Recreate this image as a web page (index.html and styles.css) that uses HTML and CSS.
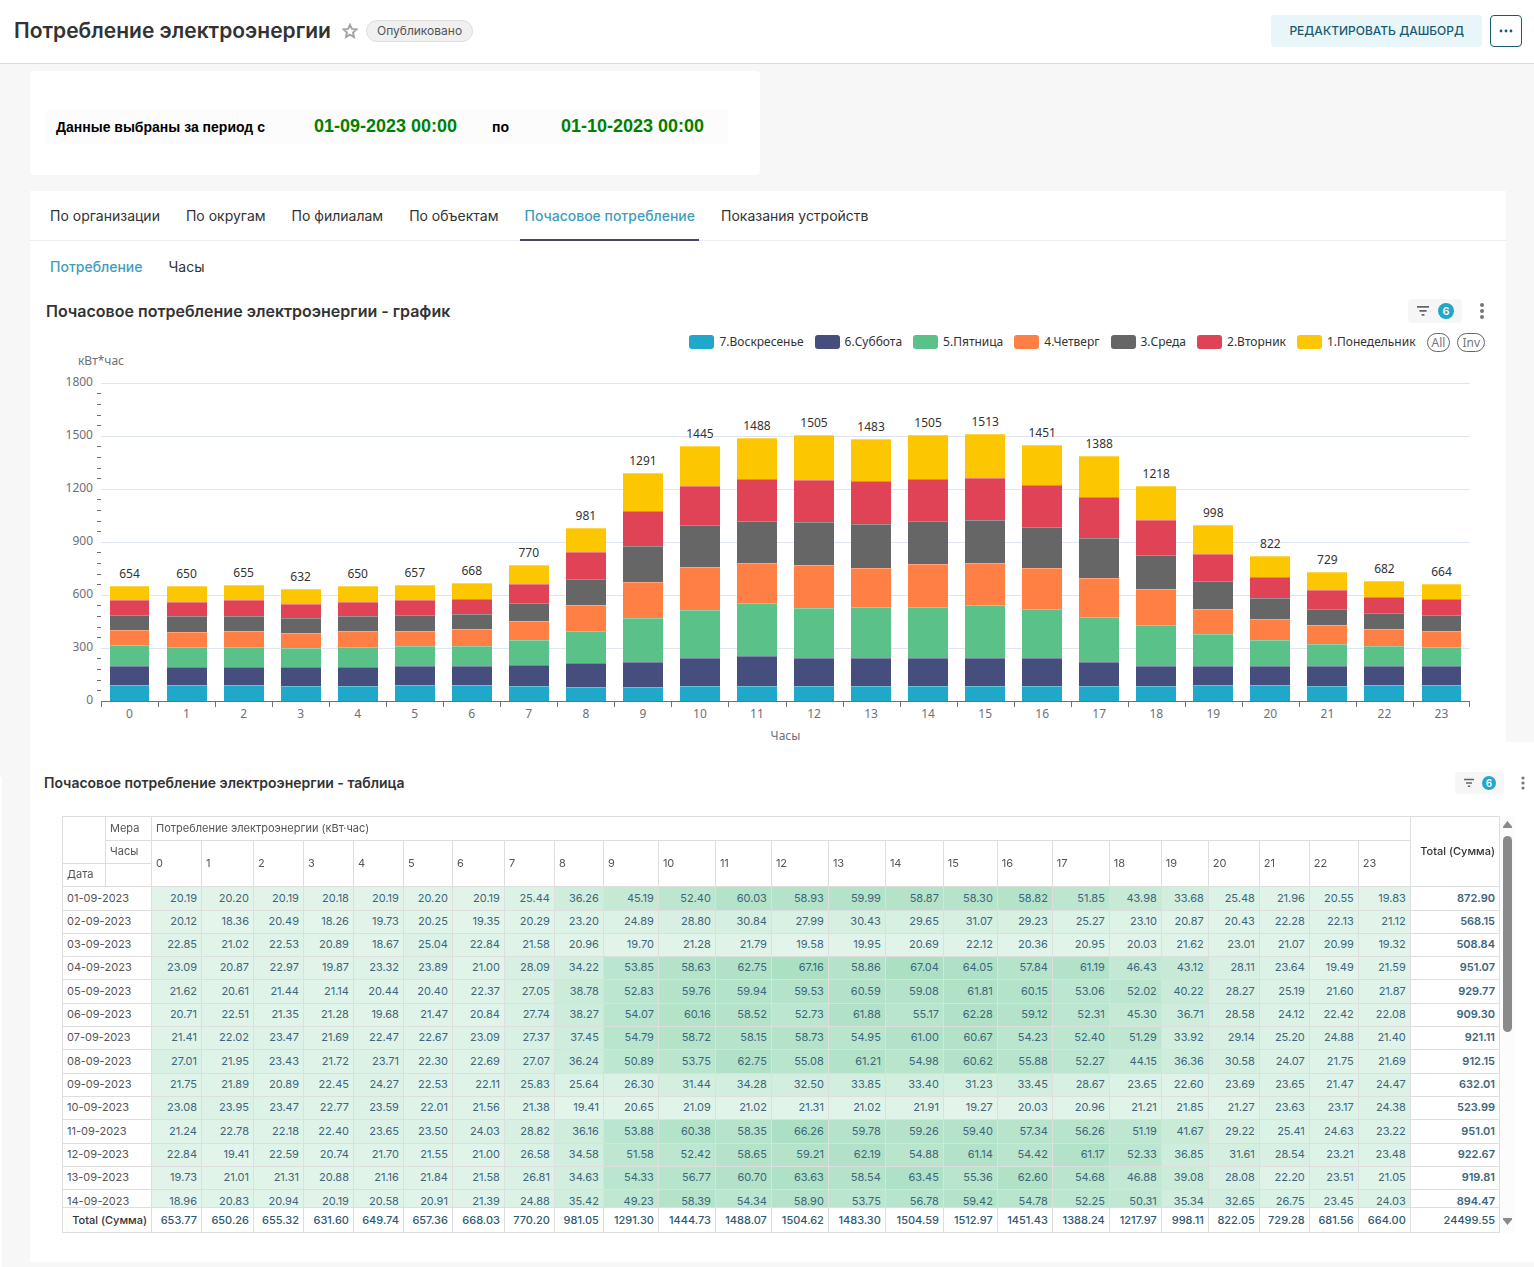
FILE: index.html
```html
<!DOCTYPE html>
<html lang="ru">
<head>
<meta charset="utf-8">
<meta name="viewport" content="width=device-width, initial-scale=1">
<title>Потребление электроэнергии</title>
<link rel="stylesheet" href="styles.css">
</head>
<body>
<header class="topbar">
  <h1 class="topbar-title">Потребление электроэнергии</h1>
  <button class="star" type="button" aria-label="В избранное">
    <svg width="16" height="16" viewBox="0 0 16 16" fill="none" stroke="#a6a6a6" stroke-width="2" stroke-linejoin="miter"><path d="M8 1.8 9.9 5.9 14.4 6.4 11 9.5 12 14 8 11.7 4 14 5 9.5 1.6 6.4 6.1 5.9Z"/></svg>
  </button>
  <span class="status">Опубликовано</span>
  <div class="topbar-actions">
    <button class="edit" type="button">РЕДАКТИРОВАТЬ ДАШБОРД</button>
    <button class="more" type="button" aria-label="Ещё">
      <svg width="14" height="4" viewBox="0 0 14 4" fill="#1a5a70"><circle cx="2" cy="2" r="1.4"/><circle cx="7" cy="2" r="1.4"/><circle cx="12" cy="2" r="1.4"/></svg>
    </button>
  </div>
</header>

<main class="dashboard">
  <section class="period">
    <p class="period-line">
      <span>Данные выбраны за период с</span>
      <time class="period-date">01-09-2023 00:00</time>
      <span>по</span>
      <time class="period-date">01-10-2023 00:00</time>
    </p>
  </section>

  <section class="panel">
    <nav class="tabs" role="tablist">
      <button class="tab" role="tab" type="button">По организации</button>
      <button class="tab" role="tab" type="button">По округам</button>
      <button class="tab" role="tab" type="button">По филиалам</button>
      <button class="tab" role="tab" type="button">По объектам</button>
      <button class="tab tab-active tab-marked" role="tab" type="button" aria-selected="true">Почасовое потребление</button>
      <button class="tab" role="tab" type="button">Показания устройств</button>
    </nav>
    <nav class="tabs subtabs" role="tablist">
      <button class="tab tab-active" role="tab" type="button" aria-selected="true">Потребление</button>
      <button class="tab" role="tab" type="button">Часы</button>
    </nav>
    <div class="widget-head">
      <h2 class="widget-title">Почасовое потребление электроэнергии - график</h2>
      <button class="filters" type="button" aria-label="Применённые фильтры">
        <svg width="14" height="12" viewBox="0 0 14 12" fill="#666"><path d="M1 1h12v1.8H1zM3.4 5h7.2v1.8H3.4zM5.6 9h2.8v1.8H5.6z"/></svg>
        <span class="filters-count">6</span>
      </button>
      <button class="kebab" type="button" aria-label="Меню">
        <svg width="6" height="18" viewBox="0 0 6 18" fill="#777"><circle cx="3" cy="3" r="2"/><circle cx="3" cy="9" r="2"/><circle cx="3" cy="15" r="2"/></svg>
      </button>
    </div>
    <div class="legend">
      <span class="legend-item"><i class="swatch s-sun"></i>7.Воскресенье</span>
      <span class="legend-item"><i class="swatch s-sat"></i>6.Суббота</span>
      <span class="legend-item"><i class="swatch s-fri"></i>5.Пятница</span>
      <span class="legend-item"><i class="swatch s-thu"></i>4.Четверг</span>
      <span class="legend-item"><i class="swatch s-wed"></i>3.Среда</span>
      <span class="legend-item"><i class="swatch s-tue"></i>2.Вторник</span>
      <span class="legend-item"><i class="swatch s-mon"></i>1.Понедельник</span>
      <button class="legend-pick" type="button">All</button>
      <button class="legend-pick" type="button">Inv</button>
    </div>
    <div class="chart">
      <div class="y-name">кВт*час</div>
      <div class="y-labels">
        <span>1800</span><span>1500</span><span>1200</span><span>900</span><span>600</span><span>300</span><span>0</span>
      </div>
      <div class="y-ticks"></div>
      <div class="plot" id="plot"></div>
      <div class="x-labels" id="hours"></div>
      <div class="x-name">Часы</div>
    </div>
  </section>

  <section class="panel panel-wide">
    <div class="widget-head widget-head-small">
      <h2 class="widget-title">Почасовое потребление электроэнергии - таблица</h2>
      <button class="filters" type="button" aria-label="Применённые фильтры">
        <svg width="12" height="10" viewBox="0 0 14 12" fill="#666"><path d="M1 1h12v1.8H1zM3.4 5h7.2v1.8H3.4zM5.6 9h2.8v1.8H5.6z"/></svg>
        <span class="filters-count">6</span>
      </button>
      <button class="kebab" type="button" aria-label="Меню">
        <svg width="4" height="14" viewBox="0 0 4 14" fill="#777"><circle cx="2" cy="2" r="1.6"/><circle cx="2" cy="7" r="1.6"/><circle cx="2" cy="12" r="1.6"/></svg>
      </button>
    </div>
    <div class="pivot-area">
      <div class="pivot-scroll">
        <table class="pivot">
          <colgroup id="cols"></colgroup>
          <thead>
            <tr><td rowspan="2"></td><th scope="row">Мера</th><th colspan="24">Потребление электроэнергии (кВт·час)</th><th class="grand" rowspan="3" scope="col">Total (Сумма)</th></tr>
            <tr id="head-hours"><th scope="row">Часы</th></tr>
            <tr><th scope="col">Дата</th><td></td></tr>
          </thead>
          <tbody id="rows"></tbody>
          <tfoot><tr id="totals"><th class="grand" colspan="2" scope="row">Total (Сумма)</th></tr></tfoot>
        </table>
      </div>
      <div class="scrollbar">
        <svg width="9" height="7" viewBox="0 0 9 7" fill="#8a8a8a"><path d="M4.5 0 9 5.5V7H0V5.5Z"/></svg>
        <span class="thumb"></span>
        <svg width="9" height="7" viewBox="0 0 9 7" fill="#8a8a8a"><path d="M0 0H9V1.5L4.5 7 0 1.5Z"/></svg>
      </div>
    </div>
  </section>
</main>
<script src="app.js"></script>
</body>
</html>
```

FILE: styles.css
```css
* { box-sizing: border-box; }
body {
  margin: 0;
  color: #333;
  background: linear-gradient(#fff, #fff) 0 777px / 2px 100% no-repeat #f7f7f7;
  font: 14px/20px Inter, sans-serif;
}
button { margin: 0; padding: 0; border: 0; background: none; color: inherit; font: inherit; cursor: pointer; }
h1, h2, p { margin: 0; }
svg { display: block; }

.topbar {
  display: flex;
  align-items: center;
  height: 64px;
  padding: 0 12px 2px 14px;
  border-bottom: 1px solid #dcdcdc;
  background: #fff;
}
.topbar-title { font-size: 21px; line-height: 28px; font-weight: 600; }
.star { margin: 0 8px 0 11px; }
.status {
  padding: 0 10px;
  border: 1px solid #dedede;
  border-radius: 11px;
  background: #f0f0f0;
  color: #555;
  font-size: 12px;
  line-height: 20px;
}
.topbar-actions { display: flex; gap: 8px; margin-left: auto; }
.edit {
  height: 32px;
  padding: 0 18px;
  border-radius: 4px;
  background: #e9f6f9;
  color: #1a5a70;
  font-size: 12px;
  font-weight: 500;
}
.more {
  display: grid;
  place-items: center;
  width: 32px;
  height: 32px;
  border: 1px solid #1a5a70;
  border-radius: 4px;
}

.dashboard { padding: 7px 0 5px 30px; }
.period {
  max-width: 730px;
  margin-bottom: 16px;
  padding: 38px 32px 31px 16px;
  border-radius: 4px;
  background: #fff;
}
.period-line {
  display: grid;
  grid-template-columns: 258px 178px 69px 1fr;
  align-items: baseline;
  height: 35px;
  padding-left: 10px;
  background: #fcfcfc;
  color: #000;
  font: bold 14px/35px "Liberation Sans", Arial, sans-serif;
}
.period-date { color: #008000; font-size: 18px; }

.panel { margin-right: 28px; background: #fff; }
.panel-wide { margin-right: 0; padding: 25px 0 29px; }

.tabs { display: flex; gap: 18px; height: 50px; padding: 0 16px; border-bottom: 1px solid #ececf0; }
.tab { padding: 0 4px; line-height: 50px; }
.tab-active { color: #3f9dbb; font-weight: 500; }
.tab-marked { margin-bottom: -1px; border-bottom: 2px solid #484666; }
.subtabs { height: 52px; border-bottom: 0; }

.widget-head { display: flex; align-items: center; height: 36px; padding: 0 21px 0 16px; }
.widget-title { margin-right: auto; font-size: 16px; font-weight: 600; }
.filters {
  display: flex;
  align-items: center;
  justify-content: space-between;
  width: 54px;
  height: 24px;
  padding: 0 8px;
  border-radius: 4px;
  background: #f6f6f6;
}
.filters-count {
  width: 16px;
  border-radius: 50%;
  background: #20a7c9;
  color: #fff;
  font-size: 11px;
  font-weight: 600;
  line-height: 16px;
}
.kebab { margin-left: 17px; }
.widget-head-small { height: 32px; padding: 0 9px 0 14px; }
.widget-head-small .widget-title { font-size: 14px; }
.widget-head-small .filters { width: 49px; height: 22px; }
.widget-head-small .filters-count { width: 14px; font-size: 10px; line-height: 14px; }

.legend, .chart { font: 12px/14px "Noto Sans", sans-serif; }
.legend { display: flex; align-items: center; justify-content: flex-end; gap: 11px; height: 26px; padding-right: 21px; }
.legend-item { display: flex; align-items: center; gap: 5px; }
.swatch { width: 25px; height: 14px; border-radius: 3px; }
.legend-pick {
  height: 19px;
  margin-right: -4px;
  padding: 0 4px;
  border: 1px solid #666;
  border-radius: 10px;
  color: #777;
  line-height: 15px;
}
.legend-pick:last-child { margin-right: 0; }
.s-sun { background: #1fa8c9; }
.s-sat { background: #454e7c; }
.s-fri { background: #5ac189; }
.s-thu { background: #ff7f44; }
.s-wed { background: #666; }
.s-tue { background: #e04355; }
.s-mon { background: #fcc700; }

.chart {
  display: grid;
  grid-template-columns: 67px 4px 1fr;
  padding-right: 36px;
  color: #6e7079;
}
.y-name { grid-column: 1 / -1; margin-bottom: 16px; padding-left: 48px; line-height: 12px; }
.y-labels {
  display: flex;
  flex-direction: column;
  justify-content: space-between;
  margin: -8px 0 -6px;
  padding-right: 4px;
  text-align: right;
}
.y-ticks {
  background: repeating-linear-gradient(transparent 0 10px, #6e7079 10px 11px, transparent 11px 21px, #6e7079 21px 22px, transparent 22px 32px, #6e7079 32px 33px, transparent 33px 42px, #6e7079 42px 43px, transparent 43px 53px);
}
.plot {
  display: grid;
  grid-template-columns: repeat(24, 1fr);
  height: 318px;
  background: repeating-linear-gradient(#e0e6f1 0 1px, transparent 1px 53px);
}
.bar { display: flex; flex-direction: column; justify-content: flex-end; align-items: center; min-height: 0; }
.bar-value {
  margin-bottom: 5px;
  color: #333;
  text-shadow: 0 0 2px #fff, 1px 0 1px #fff, -1px 0 1px #fff;
}
.bar-part { width: 70%; border-top: 1px solid rgba(255, 255, 255, .3); flex: none; }
.x-labels {
  grid-column: 3;
  display: grid;
  grid-template-columns: repeat(24, 1fr);
  border-top: 1px solid #6e7079;
  text-align: center;
}
.x-labels span { padding-top: 5px; background: linear-gradient(#6e7079, #6e7079) 0 0 / 1px 5px no-repeat; }
.x-labels span:last-child {
  background: linear-gradient(#6e7079, #6e7079) 0 0 / 1px 5px no-repeat, linear-gradient(#6e7079, #6e7079) 100% 0 / 1px 5px no-repeat;
}
.x-name { grid-column: 3; margin-top: 9px; line-height: 12px; text-align: center; }

.pivot-area { display: flex; margin: 17px 19px 0 32px; }
.pivot-scroll { flex: 1; height: 417px; overflow: hidden; }
.pivot {
  width: 100%;
  table-layout: fixed;
  border-collapse: separate;
  border-spacing: 0;
  color: #3d667c;
  font-size: 11px;
  line-height: 16px;
}
.pivot thead { position: sticky; top: 0; background: #fff; }
.pivot tfoot { position: sticky; bottom: 0; }
.pivot th, .pivot td {
  height: 23px;
  padding: 0 4px 2px;
  border: solid #dedede;
  border-width: 0 1px 1px 0;
  white-space: nowrap;
}
.pivot th { color: #555; font-weight: 400; text-align: left; }
.pivot tr > :first-child { border-left-width: 1px; }
.pivot #head-hours > :first-child { border-left-width: 0; }
.pivot thead tr:first-child > * { height: 25px; border-top-width: 1px; }
.pivot tbody td { text-align: right; }
.pivot tbody td:last-child { background: #fff; font-weight: 600; }
.pivot tbody tr:first-child > *, .pivot tbody tr:nth-child(3n+5) > * { height: 24px; }
.pivot tfoot th, .pivot tfoot td {
  height: 26px;
  padding-bottom: 0;
  border-top-width: 1px;
  background: #fff;
  color: #2d5a72;
  font-weight: 500;
  text-align: right;
}
.pivot th.grand { color: #333; font-weight: 500; text-align: right; }
.scrollbar {
  display: flex;
  flex-direction: column;
  align-items: center;
  width: 15px;
  padding: 5px 0 8px;
  background: #fcfcfc;
}
.scrollbar svg:last-child { margin-top: auto; }
.thumb { width: 9px; height: 196px; margin-top: 8px; border-radius: 5px; background: #8a8a8a; }
```

FILE: app.js
```js
// Running totals per hour, Sunday (bottom of the stack) to Monday (top), kWh.
const stacks = [
  [89,198,315,402,485,572,654],[89,194,304,392,479,562,650],[89,194,304,394,483,570,655],
  [85,191,298,385,468,551,632],[85,194,304,394,479,562,650],[91,200,309,396,485,570,657],
  [89,198,313,406,491,579,668],[85,204,343,451,553,662,770],[81,213,394,542,689,842,981],
  [81,221,468,672,879,1078,1291],[85,242,517,757,994,1215,1445],[85,253,553,779,1017,1255,1488],
  [85,245,528,768,1011,1249,1505],[85,245,530,751,1000,1244,1483],[87,245,534,777,1017,1255,1505],
  [87,243,542,779,1023,1262,1513],[85,242,523,751,983,1225,1451],[87,219,477,694,923,1155,1388],
  [87,200,428,636,825,1027,1218],[89,200,377,523,677,834,998],[89,200,343,466,583,704,822],
  [87,200,325,428,521,630,729],[89,200,313,409,496,591,682],[89,196,304,396,485,577,664]
];
const days = ['sun', 'sat', 'fri', 'thu', 'wed', 'tue', 'mon'];
const axisMax = 1800;

document.getElementById('plot').innerHTML = stacks.map(stack => {
  const parts = days.map((day, i) => {
    const share = (stack[i] - (i ? stack[i - 1] : 0)) / axisMax * 100;
    return `<div class="bar-part s-${day}" style="height:${share.toFixed(3)}%"></div>`;
  }).reverse().join('');
  return `<div class="bar"><span class="bar-value">${stack[6]}</span>${parts}</div>`;
}).join('');
document.getElementById('hours').innerHTML = stacks.map((_, h) => `<span>${h}</span>`).join('');

const table = `
20.19 20.20 20.19 20.18 20.19 20.20 20.19 25.44 36.26 45.19 52.40 60.03 58.93 59.99 58.87 58.30 58.82 51.85 43.98 33.68 25.48 21.96 20.55 19.83 872.90
20.12 18.36 20.49 18.26 19.73 20.25 19.35 20.29 23.20 24.89 28.80 30.84 27.99 30.43 29.65 31.07 29.23 25.27 23.10 20.87 20.43 22.28 22.13 21.12 568.15
22.85 21.02 22.53 20.89 18.67 25.04 22.84 21.58 20.96 19.70 21.28 21.79 19.58 19.95 20.69 22.12 20.36 20.95 20.03 21.62 23.01 21.07 20.99 19.32 508.84
23.09 20.87 22.97 19.87 23.32 23.89 21.00 28.09 34.22 53.85 58.63 62.75 67.16 58.86 67.04 64.05 57.84 61.19 46.43 43.12 28.11 23.64 19.49 21.59 951.07
21.62 20.61 21.44 21.14 20.44 20.40 22.37 27.05 38.78 52.83 59.76 59.94 59.53 60.59 59.08 61.81 60.15 53.06 52.02 40.22 28.27 25.19 21.60 21.87 929.77
20.71 22.51 21.35 21.28 19.68 21.47 20.84 27.74 38.27 54.07 60.16 58.52 52.73 61.88 55.17 62.28 59.12 52.31 45.30 36.71 28.58 24.12 22.42 22.08 909.30
21.41 22.02 23.47 21.69 22.47 22.67 23.09 27.37 37.45 54.79 58.72 58.15 58.73 54.95 61.00 60.67 54.23 52.40 51.29 33.92 29.14 25.20 24.88 21.40 921.11
27.01 21.95 23.43 21.72 23.71 22.30 22.69 27.07 36.24 50.89 53.75 62.75 55.08 61.21 54.98 60.62 55.88 52.27 44.15 36.36 30.58 24.07 21.75 21.69 912.15
21.75 21.89 20.89 22.45 24.27 22.53 22.11 25.83 25.64 26.30 31.44 34.28 32.50 33.85 33.40 31.23 33.45 28.67 23.65 22.60 23.69 23.65 21.47 24.47 632.01
23.08 23.95 23.47 22.77 23.59 22.01 21.56 21.38 19.41 20.65 21.09 21.02 21.31 21.02 21.91 19.27 20.03 20.96 21.21 21.85 21.27 23.63 23.17 24.38 523.99
21.24 22.78 22.18 22.40 23.65 23.50 24.03 28.82 36.16 53.88 60.38 58.35 66.26 59.78 59.26 59.40 57.34 56.26 51.19 41.67 29.22 25.41 24.63 23.22 951.01
22.84 19.41 22.59 20.74 21.70 21.55 21.00 26.58 34.58 51.58 52.42 58.65 59.21 62.19 54.88 61.14 54.42 61.17 52.33 36.85 31.61 28.54 23.21 23.48 922.67
19.73 21.01 21.31 20.88 21.16 21.84 21.58 26.81 34.63 54.33 56.77 60.70 63.63 58.54 63.45 55.36 62.60 54.68 46.88 39.08 28.08 22.20 23.51 21.05 919.81
18.96 20.83 20.94 20.19 20.58 20.91 21.39 24.88 35.42 49.23 58.39 54.34 58.90 53.75 56.78 59.42 54.78 52.25 50.31 35.34 32.65 26.75 23.45 24.03 894.47`
  .trim().split('\n').map(line => line.split(' '));
const totals = '653.77 650.26 655.32 631.60 649.74 657.36 668.03 770.20 981.05 1291.30 1444.73 1488.07 1504.62 1483.30 1504.59 1512.97 1451.43 1388.24 1217.97 998.11 822.05 729.28 681.56 664.00 24499.55'.split(' ');
const widths = [44, 46, 50, 52, 50, 50, 50, 49, 52, 50, 49, 55, 57, 56, 57, 57, 58, 54, 55, 57, 52, 47, 51, 50, 49, 52, 89];

const widthSum = widths.reduce((a, b) => a + b, 0);
document.getElementById('cols').innerHTML =
  widths.map(w => `<col style="width:${(w / widthSum * 100).toFixed(3)}%">`).join('');
document.getElementById('head-hours').insertAdjacentHTML('beforeend',
  stacks.map((_, h) => `<th scope="col" rowspan="2">${h}</th>`).join(''));
document.getElementById('rows').innerHTML = table.map((row, i) => {
  const cells = row.map((value, h) => {
    if (h === 24) return `<td>${value}</td>`;
    const alpha = (0.17 + (value - 19) * 0.007).toFixed(3);
    return `<td style="background:rgba(90,193,137,${alpha})">${value}</td>`;
  }).join('');
  return `<tr><th colspan="2" scope="row">${String(i + 1).padStart(2, '0')}-09-2023</th>${cells}</tr>`;
}).join('');
document.getElementById('totals').insertAdjacentHTML('beforeend',
  totals.map(value => `<td>${value}</td>`).join(''));
```
